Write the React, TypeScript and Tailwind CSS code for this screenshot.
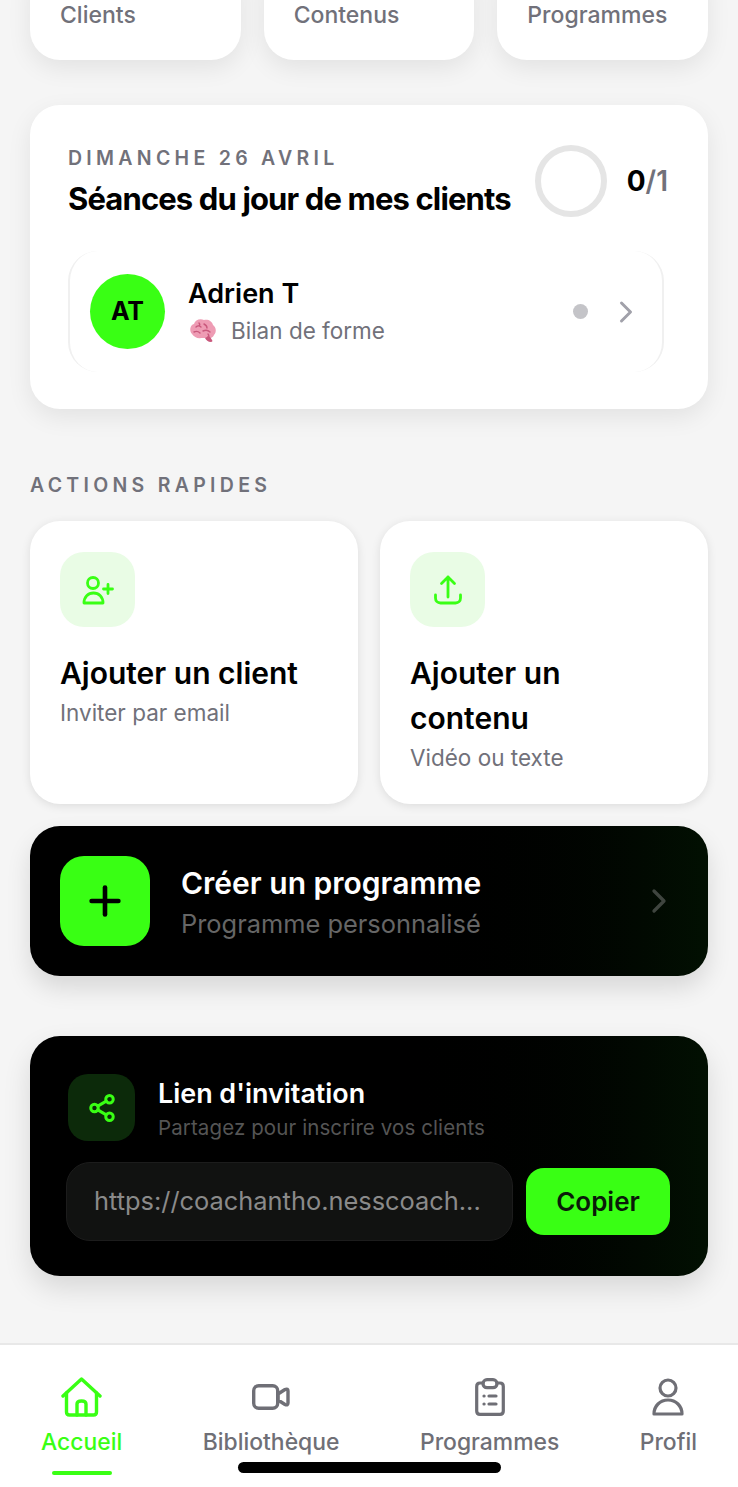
import { ChevronRight, Plus, Share2 } from "lucide-react";

const GREEN = "#39ff14";
const GREY = "#6f6f76";

function Brain() {
  return (
    <svg width="30" height="28" viewBox="0 0 30 28" className="shrink-0">
      <path d="M4 17C1 14 2 8 6 7 7 3 12 1 16 3c4-1 8 1 9 5 3 2 4 7 1 10-1 3-5 4-8 3-2 0-3 0-5 0-3 1-7-1-9-4Z" fill="#ee9cb4" />
      <path d="M17 21c1 2 3 4 6 4 1 0 2-1 1-2-1-2-2-3-3-4Z" fill="#c9587c" />
      <path d="M8 10c2-2 4-1 5 0M16 7c2 1 3 2 3 4M6 15c2-1 4-1 6 1M15 14c2-1 5-1 7 1M11 6c1 1 1 2 0 3M20 17c1 1 1 2 0 3" stroke="#c9587c" strokeWidth="1.4" fill="none" strokeLinecap="round" />
    </svg>
  );
}

function AddUserIcon() {
  return (
    <svg width="36" height="36" viewBox="0 0 36 36" fill="none" stroke={GREEN} strokeWidth="2.8" strokeLinecap="round" strokeLinejoin="round">
      <circle cx="13" cy="11" r="5.5" />
      <path d="M4 31c0-6 4-10 9.500-10S23 25 23 31Z" />
      <path d="M28 12.500v9M23.500 17h9" />
    </svg>
  );
}

function UploadIcon() {
  return (
    <svg width="34" height="36" viewBox="0 0 34 36" fill="none" stroke={GREEN} strokeWidth="2.8" strokeLinecap="round" strokeLinejoin="round">
      <path d="M17 25V5M10.500 11.500 17 5l6.500 6.500" />
      <path d="M4.500 23v3c0 3 2 5 5 5h15c3 0 5-2 5-5v-3" />
    </svg>
  );
}

function HomeIcon() {
  return (
    <svg width="41" height="40" viewBox="0 0 41 40" fill="none" stroke={GREEN} strokeWidth="3.4" strokeLinecap="round" strokeLinejoin="round">
      <path d="M2 19 20.500 2 39 19" />
      <path d="M5.500 16v19c0 2 1 3 3 3h24c2 0 3-1 3-3V16" />
      <path d="M16 38V27c0-2 1-3 4.500-3s4.500 1 4.500 3v11" />
    </svg>
  );
}

function VideoIcon() {
  return (
    <svg width="38" height="26" viewBox="0 0 38 26" fill="none" stroke={GREY} strokeWidth="3.4" strokeLinecap="round" strokeLinejoin="round">
      <rect x="1.700" y="1.700" width="24" height="22.600" rx="5" />
      <path d="M26 10l7-4.500c2-1 3 0 3 1.500v12c0 1.500-1 2.500-3 1.500L26 16Z" />
    </svg>
  );
}

function ClipboardIcon() {
  return (
    <svg width="30" height="38" viewBox="0 0 30 38" fill="none" stroke={GREY} strokeWidth="3.2" strokeLinecap="round" strokeLinejoin="round">
      <path d="M8 5H5C3 5 1.700 6.500 1.700 8.500V33c0 2 1.300 3.400 3.300 3.400h20c2 0 3.300-1.400 3.300-3.400V8.500C28.300 6.500 27 5 25 5h-3" />
      <rect x="8" y="1.700" width="14" height="8" rx="4" />
      <path d="M9 18h.1M14 18h7M9 26h.1M14 26h7" />
    </svg>
  );
}

function ProfileIcon() {
  return (
    <svg width="32" height="38" viewBox="0 0 32 38" fill="none" stroke={GREY} strokeWidth="3.2" strokeLinecap="round" strokeLinejoin="round">
      <circle cx="16" cy="10" r="8" />
      <path d="M2 36c0-8 6-14 14-14s14 6 14 14Z" />
    </svg>
  );
}

function StatCard({ label }: { label: string }) {
  return (
    <div className="flex h-[100px] flex-col justify-end rounded-[30px] bg-white px-[30px] pb-[30px] shadow-[0_8px_24px_rgba(0,0,0,0.08)]">
      <span className="text-[23px] leading-[30px] font-medium text-[#71717a]">{label}</span>
    </div>
  );
}

function ActionCard({ icon, title, sub }: { icon: React.ReactNode; title: string; sub: string }) {
  return (
    <div className="h-[283px] rounded-[30px] bg-white px-[30px] pt-[31px] shadow-[0_2px_10px_rgba(0,0,0,0.1)]">
      <div className="flex h-[75px] w-[75px] items-center justify-center rounded-[24px] bg-[#e9fce5]">{icon}</div>
      <p className="mt-[24px] text-[30px] leading-[45px] font-semibold text-black">{title}</p>
      <p className="text-[22.5px] leading-[34px] text-[#71717a]">{sub}</p>
    </div>
  );
}

function NavItem({ icon, label, active }: { icon: React.ReactNode; label: string; active?: boolean }) {
  return (
    <div className="flex flex-col items-center">
      <div className="flex h-[52px] items-center justify-center">{icon}</div>
      <span className={active ? "mt-[2px] text-[22.9px] leading-[34px] font-medium text-[#39ff14]" : "mt-[2px] text-[22.9px] leading-[34px] font-medium text-[#6f6f76]"}>
        {label}
      </span>
      {active ? <div className="mt-[12px] h-[4px] w-[60px] rounded-full bg-[#39ff14]" /> : null}
    </div>
  );
}

export default function App() {
  return (
    <div className="relative flex h-[1487px] w-[738px] flex-col overflow-hidden bg-[#f5f5f5] font-['Inter',sans-serif]">
      <main className="flex-1 px-[30px]">
        <div className="mt-[-40px] grid grid-cols-3 gap-[23px]">
          <StatCard label="Clients" />
          <StatCard label="Contenus" />
          <StatCard label="Programmes" />
        </div>

        <section className="mt-[45px] h-[304px] rounded-[30px] bg-white px-[38px] pt-[40px] shadow-[0_8px_24px_rgba(0,0,0,0.08)]">
          <div className="flex items-start justify-between">
            <div>
              <p className="text-[19.5px] leading-[26px] font-semibold tracking-[0.22em] text-[#71717a]">DIMANCHE 26 AVRIL</p>
              <h2 className="mt-[7px] text-[31px] leading-[42px] font-bold tracking-[-0.028em] whitespace-nowrap text-black">Séances du jour de mes clients</h2>
            </div>
            <div className="flex items-center gap-[20px] pr-[2px]">
              <div className="h-[72px] w-[72px] rounded-full border-[6px] border-[#e5e5e5]" />
              <p className="text-[28px] font-bold text-black">
                0<span className="font-semibold text-[#71717a]">/1</span>
              </p>
            </div>
          </div>
          <div className="mt-[31px] mr-[6px] flex h-[121px] items-center rounded-[30px] border-x-2 border-[#f0f0f0] px-[20px]">
            <div className="flex h-[75px] w-[75px] shrink-0 items-center justify-center rounded-full bg-[#39ff14] text-[25px] font-bold text-black">AT</div>
            <div className="ml-[23px] flex-1">
              <p className="text-[27px] leading-[36px] font-semibold text-black">Adrien T</p>
              <div className="mt-[2px] flex items-center gap-[13px]">
                <Brain />
                <span className="text-[22.5px] leading-[34px] text-[#71717a]">Bilan de forme</span>
              </div>
            </div>
            <div className="h-[15px] w-[15px] rounded-full bg-[#c4c4c8]" />
            <ChevronRight size={36} strokeWidth={2} className="mr-[-2px] ml-[20px] text-[#a1a1aa]" />
          </div>
        </section>

        <h3 className="mt-[63px] text-[19.5px] leading-[26px] font-semibold tracking-[0.22em] text-[#71717a]">ACTIONS RAPIDES</h3>

        <div className="mt-[23px] grid grid-cols-2 gap-[22px]">
          <ActionCard icon={<AddUserIcon />} title="Ajouter un client" sub="Inviter par email" />
          <ActionCard icon={<UploadIcon />} title="Ajouter un contenu" sub="Vidéo ou texte" />
        </div>

        <div className="mt-[22px] flex h-[150px] items-center rounded-[30px] bg-gradient-to-r from-black via-black to-[#021002] px-[30px] shadow-[0_12px_24px_rgba(0,0,0,0.12)]">
          <div className="flex h-[90px] w-[90px] shrink-0 items-center justify-center rounded-[24px] bg-[#39ff14]">
            <Plus size={46} strokeWidth={2.4} className="text-black" />
          </div>
          <div className="ml-[31px] flex-1 pt-[4px]">
            <p className="text-[30px] leading-[42px] font-semibold text-white">Créer un programme</p>
            <p className="text-[25.4px] leading-[40px] text-[#666666]">Programme personnalisé</p>
          </div>
          <ChevronRight size={40} strokeWidth={2} className="mr-[-1px] text-[#3f453f]" />
        </div>

        <div className="mt-[60px] h-[240px] rounded-[30px] bg-gradient-to-r from-black via-black to-[#021002] px-[36px] pt-[38px] shadow-[0_12px_28px_rgba(0,0,0,0.12)]">
          <div className="ml-[2px] flex h-[67px] items-center">
            <div className="flex h-[67px] w-[67px] shrink-0 items-center justify-center rounded-[20px] bg-[#0c2a0a]">
              <Share2 size={30} strokeWidth={2.4} className="text-[#39ff14]" />
            </div>
            <div className="ml-[23px]">
              <p className="text-[26.9px] leading-[38px] font-semibold text-white">Lien d'invitation</p>
              <p className="mt-[2px] text-[20.5px] leading-[28px] tracking-[0.005em] text-[#555555]">Partagez pour inscrire vos clients</p>
            </div>
          </div>
          <div className="mt-[21px] flex items-center gap-[13px]">
            <div className="flex h-[79px] w-[447px] shrink-0 items-center rounded-[24px] border border-[#1c1c1c] bg-[#111211] px-[27px]">
              <span className="truncate text-[25.4px] text-[#8a8a8a]">https://coachantho.nesscoach...</span>
            </div>
            <button className="h-[67px] w-[144px] rounded-[18px] bg-[#39ff14] text-[26px] font-semibold text-[#0a1a08]">Copier</button>
          </div>
        </div>
      </main>

      <nav className="flex h-[144px] justify-between border-t-2 border-[#e8e8e8] bg-white px-[41px] pt-[26px]">
        <NavItem icon={<HomeIcon />} label="Accueil" active />
        <NavItem icon={<VideoIcon />} label="Bibliothèque" />
        <NavItem icon={<ClipboardIcon />} label="Programmes" />
        <NavItem icon={<ProfileIcon />} label="Profil" />
      </nav>

      <div className="absolute bottom-[14px] left-[238px] h-[11px] w-[263px] rounded-full bg-black" />
    </div>
  );
}
